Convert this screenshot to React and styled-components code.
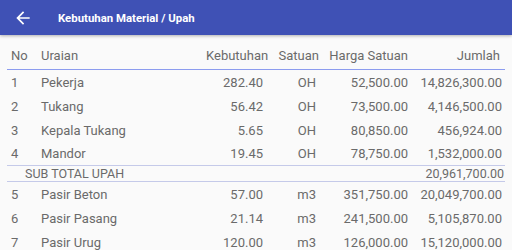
import React from "react";
import styled, { createGlobalStyle } from "styled-components";

const Global = createGlobalStyle`
  html, body { margin: 0; padding: 0; background: #fafafa; }
  body { font-family: Roboto, "Noto Sans", sans-serif; overflow: hidden; }
`;

const Page = styled.div`
  width: 512px;
  height: 250px;
  background: #fafafa;
  overflow: hidden;
`;

const AppBar = styled.header`
  height: 35px;
  background: #3f51b5;
  display: flex;
  align-items: center;
  box-shadow: 0 1px 3px rgba(0, 0, 0, 0.3);
  position: relative;
  z-index: 1;
`;

const BackButton = styled.div`
  width: 20px;
  height: 20px;
  margin-left: 13px;
  display: flex;
  align-items: center;
  justify-content: center;
`;

const Title = styled.h1`
  margin: 0 0 0 25px;
  color: #fff;
  font-size: 11.4px;
  font-weight: 700;
  letter-spacing: 0;
`;

const Table = styled.div`
  margin: 0 7px;
  color: #6a6a6a;
`;

const cols = "34px 1fr 57px 57px 89px 96px";

const HeadRow = styled.div`
  display: grid;
  grid-template-columns: ${cols};
  height: 35px;
  align-items: end;
  box-sizing: border-box;
  padding-bottom: 6px;
  border-bottom: 1px solid #8c9cef;
  font-size: 13px;
`;

const Row = styled.div`
  display: grid;
  grid-template-columns: ${cols};
  height: ${(p) => (p.$last ? 23 : 24)}px;
  align-items: center;
  font-size: 13px;
  border-bottom: ${(p) => (p.$last ? "1px solid #c5cae9" : "none")};
`;

const SubRow = styled.div`
  display: flex;
  justify-content: space-between;
  align-items: center;
  height: 15px;
  padding: 0 1px 0 18px;
  font-size: 12.5px;
  border-bottom: 1px solid #c5cae9;
`;

const Cell = styled.div`
  text-align: ${(p) => p.$align || "left"};
  padding-left: ${(p) => p.$pl || 0}px;
  padding-right: ${(p) => p.$pr || 0}px;
  white-space: nowrap;
`;

const upah = [
  ["1", "Pekerja", "282.40", "OH", "52,500.00", "14,826,300.00"],
  ["2", "Tukang", "56.42", "OH", "73,500.00", "4,146,500.00"],
  ["3", "Kepala Tukang", "5.65", "OH", "80,850.00", "456,924.00"],
  ["4", "Mandor", "19.45", "OH", "78,750.00", "1,532,000.00"],
];

const material = [
  ["5", "Pasir Beton", "57.00", "m3", "351,750.00", "20,049,700.00"],
  ["6", "Pasir Pasang", "21.14", "m3", "241,500.00", "5,105,870.00"],
  ["7", "Pasir Urug", "120.00", "m3", "126,000.00", "15,120,000.00"],
];

function DataRow({ r, last }) {
  return (
    <Row $last={last}>
      <Cell $pl={4}>{r[0]}</Cell>
      <Cell>{r[1]}</Cell>
      <Cell $align="right">{r[2]}</Cell>
      <Cell $align="right" $pr={4}>{r[3]}</Cell>
      <Cell $align="right" $pr={1}>{r[4]}</Cell>
      <Cell $align="right" $pr={3}>{r[5]}</Cell>
    </Row>
  );
}

export default function App() {
  return (
    <Page>
      <Global />
      <AppBar>
        <BackButton>
          <svg width="20" height="20" viewBox="0 0 24 24">
            <path fill="#fff" d="M20 11H7.83l5.59-5.59L12 4l-8 8 8 8 1.41-1.41L7.83 13H20v-2z" />
          </svg>
        </BackButton>
        <Title>Kebutuhan Material / Upah</Title>
      </AppBar>
      <Table>
        <HeadRow>
          <Cell $pl={4}>No</Cell>
          <Cell>Uraian</Cell>
          <Cell $align="right">Kebutuhan</Cell>
          <Cell $align="right" $pr={1}>Satuan</Cell>
          <Cell $align="right" $pr={1}>Harga Satuan</Cell>
          <Cell $align="right" $pr={5}>Jumlah</Cell>
        </HeadRow>
        {upah.map((r, i) => (
          <DataRow key={r[0]} r={r} last={i === upah.length - 1} />
        ))}
        <SubRow>
          <span>SUB TOTAL UPAH</span>
          <span>20,961,700.00</span>
        </SubRow>
        {material.map((r) => (
          <DataRow key={r[0]} r={r} />
        ))}
      </Table>
    </Page>
  );
}
